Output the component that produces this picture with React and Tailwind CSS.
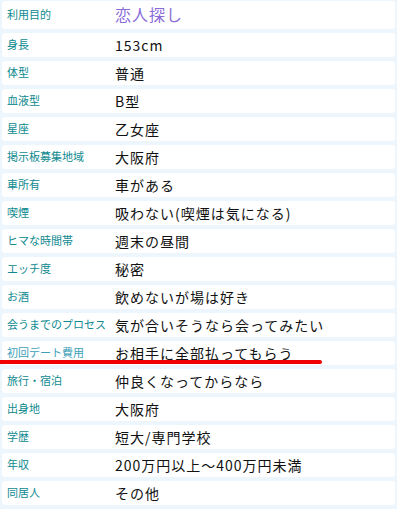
import React from "react";

const rows = [
  ["身長", "153cm"],
  ["体型", "普通"],
  ["血液型", "B型"],
  ["星座", "乙女座"],
  ["掲示板募集地域", "大阪府"],
  ["車所有", "車がある"],
  ["喫煙", "吸わない(喫煙は気になる)"],
  ["ヒマな時間帯", "週末の昼間"],
  ["エッチ度", "秘密"],
  ["お酒", "飲めないが場は好き"],
  ["会うまでのプロセス", "気が合いそうなら会ってみたい"],
  ["初回デート費用", "お相手に全部払ってもらう", true],
  ["旅行・宿泊", "仲良くなってからなら"],
  ["出身地", "大阪府"],
  ["学歴", "短大/専門学校"],
  ["年収", "200万円以上～400万円未満"],
  ["同居人", "その他"],
];

const font = { fontFamily: '"Noto Sans CJK JP", "Noto Sans", sans-serif' };

export default function App() {
  return (
    <div className="w-[397px] h-[509px] bg-[#edf5fd] pt-[1px] pb-[4px] overflow-hidden relative" style={font}>
      <div className="flex flex-col gap-[4px]">
        <div className="mx-[2px] h-[28px] bg-white rounded-[3px] flex items-center">
          <div className="w-[113px] pl-[5px] text-[11px] leading-none text-[#0e8a8f] -mt-[2px]">利用目的</div>
          <div className="text-[16px] leading-none text-[#8a6bd8] tracking-[1px] -mt-[2px]">恋人探し</div>
        </div>
        {rows.map(([label, value, light]) => (
          <div key={label} className="mx-[2px] h-[24px] bg-white rounded-[3px] flex items-center relative">
            <div className={`w-[113px] pl-[5px] text-[11px] leading-none whitespace-nowrap -mt-[1px] ${light ? "text-[#3da0b8]" : "text-[#0e8a8f]"}`}>{label}</div>
            <div className="text-[14px] leading-none text-[#111] tracking-[1px] whitespace-nowrap">{value}</div>
            {light && (
              <div className="absolute left-[-2px] top-[19px] w-[322px] h-[4px] bg-[#f00000] rounded-r-full" />
            )}
          </div>
        ))}
      </div>
    </div>
  );
}
